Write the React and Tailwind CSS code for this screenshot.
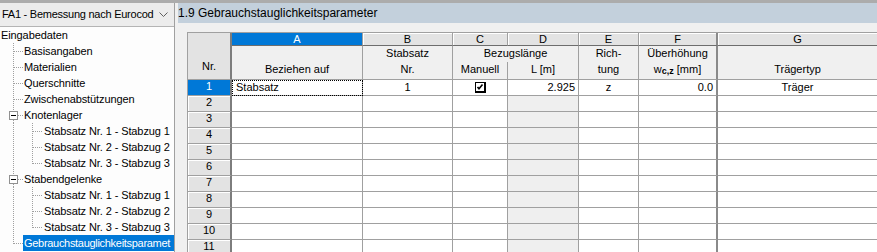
import React from "react";

const DOT = "#a0a0a0";

function L1Prefix({ exp, last }) {
  return (
    <svg width="23" height="16" className="shrink-0" shapeRendering="crispEdges">
      {exp ? (
        <>
          <line x1="13.5" y1="0" x2="13.5" y2="4" stroke={DOT} strokeDasharray="1 1" />
          {!last && <line x1="13.5" y1="13" x2="13.5" y2="16" stroke={DOT} strokeDasharray="1 1" />}
          <rect x="9.5" y="4.5" width="8" height="8" fill="#fff" stroke="#919191" />
          <line x1="11" y1="8.5" x2="16" y2="8.5" stroke="#000" />
          <line x1="18" y1="8.5" x2="23" y2="8.5" stroke={DOT} strokeDasharray="1 1" />
        </>
      ) : (
        <>
          <line x1="13.5" y1="0" x2="13.5" y2={last ? 9 : 16} stroke={DOT} strokeDasharray="1 1" />
          <line x1="14" y1="8.5" x2="23" y2="8.5" stroke={DOT} strokeDasharray="1 1" />
        </>
      )}
    </svg>
  );
}

function L2Prefix({ last }) {
  return (
    <svg width="43" height="16" className="shrink-0" shapeRendering="crispEdges">
      <line x1="13.5" y1="0" x2="13.5" y2="16" stroke={DOT} strokeDasharray="1 1" />
      <line x1="32.5" y1="0" x2="32.5" y2={last ? 9 : 16} stroke={DOT} strokeDasharray="1 1" />
      <line x1="33" y1="8.5" x2="43" y2="8.5" stroke={DOT} strokeDasharray="1 1" />
    </svg>
  );
}

const tree = [
  { t: "Eingabedaten", lvl: 0 },
  { t: "Basisangaben", lvl: 1 },
  { t: "Materialien", lvl: 1 },
  { t: "Querschnitte", lvl: 1 },
  { t: "Zwischenabstützungen", lvl: 1 },
  { t: "Knotenlager", lvl: 1, exp: true },
  { t: "Stabsatz Nr. 1 - Stabzug 1", lvl: 2 },
  { t: "Stabsatz Nr. 2 - Stabzug 2", lvl: 2 },
  { t: "Stabsatz Nr. 3 - Stabzug 3", lvl: 2, last: true },
  { t: "Stabendgelenke", lvl: 1, exp: true },
  { t: "Stabsatz Nr. 1 - Stabzug 1", lvl: 2 },
  { t: "Stabsatz Nr. 2 - Stabzug 2", lvl: 2 },
  { t: "Stabsatz Nr. 3 - Stabzug 3", lvl: 2, last: true },
  { t: "Gebrauchstauglichkeitsparamet", lvl: 1, last: true, sel: true },
];

function LeftPanel() {
  return (
    <div className="w-[175px] shrink-0 border-r border-[#a0a0a0] bg-[#fdfdfd] flex flex-col overflow-hidden">
      <div className="h-[24px] shrink-0 bg-[#ececec] border-b border-[#b4b4b4] flex items-center justify-between pl-[2px] pr-[6px]">
        <span className="whitespace-nowrap text-[11px] tracking-[-0.25px]">FA1 - Bemessung nach Eurocod</span>
        <svg width="9" height="6" className="shrink-0">
          <polyline points="0.5,0.5 4.5,4.5 8.5,0.5" fill="none" stroke="#606060" strokeWidth="1" />
        </svg>
      </div>
      <div className="flex flex-col">
        {tree.map((n, i) => (
          <div key={i} className="h-[16px] flex items-center whitespace-nowrap leading-[16px] tracking-[-0.1px]">
            {n.lvl === 0 && <span className="pl-[1px]">{n.t}</span>}
            {n.lvl === 1 && <L1Prefix exp={n.exp} last={n.last} />}
            {n.lvl === 2 && <L2Prefix last={n.last} />}
            {n.lvl > 0 && (
              <span
                className={
                  n.sel
                    ? "flex-1 bg-[#0078d7] text-white pl-[1px] h-[16px] tracking-[-0.3px]"
                    : "pl-[1px]"
                }
              >
                {n.t}
              </span>
            )}
          </div>
        ))}
      </div>
    </div>
  );
}

function Check() {
  return (
    <svg width="11" height="11" shapeRendering="crispEdges">
      <rect x="0.5" y="0.5" width="10" height="10" fill="#fff" stroke="#000" />
      <line x1="1" y1="9.5" x2="11" y2="9.5" stroke="#000" />
      <line x1="9.5" y1="1" x2="9.5" y2="10" stroke="#000" />
      <polyline points="2.5,5 4,6.8 7.5,2.5" fill="none" stroke="#000" strokeWidth="1.6" shapeRendering="auto" />
    </svg>
  );
}

const letters = ["A", "B", "C", "D", "E", "F", "G"];
const bd = "border-[#a0a0a0]";

function Grid() {
  const rows = Array.from({ length: 11 }, (_, i) => i + 1);
  return (
    <div className={`grid grid-cols-[44px_131px_90px_55px_71px_60px_79px_160px] border-t border-l ${bd} w-max`}>
      <div className="row-span-2 bg-[#e3e3e3] border-b border-b-[#a0a0a0] border-r-2 border-r-[#7d7d7d] text-center pt-[25px] leading-[16px]">
        Nr.
      </div>
      {letters.map((l, i) => (
        <div
          key={l}
          className={`h-[13px] leading-[13px] text-center border-b border-b-[#6d6d6d] ${
            i === 5 ? "border-r-2 border-r-[#8a8a8a]" : "border-r border-r-[#a0a0a0]"
          } ${i === 0 ? "bg-[#0078d7] text-white" : "bg-[#e3e3e3] shadow-[inset_1px_1px_0_#fff]"}`}
        >
          {l}
        </div>
      ))}
      <div className={`h-[34px] bg-[#f0f0f0] border-r border-b ${bd} text-center`}>
        <div className="h-[16px] leading-[15px]"></div>
        <div className="h-[17px] leading-[15px]">Beziehen auf</div>
      </div>
      <div className={`h-[34px] bg-[#f0f0f0] border-r border-b ${bd} text-center`}>
        <div className="h-[16px] leading-[15px]">Stabsatz</div>
        <div className="h-[17px] leading-[15px]">Nr.</div>
      </div>
      <div className={`col-span-2 h-[34px] bg-[#f0f0f0] border-r border-b ${bd} text-center flex flex-col`}>
        <div className="h-[16px] leading-[15px]">Bezugslänge</div>
        <div className="h-[17px] flex">
          <div className={`w-[55px] border-r ${bd} leading-[15px]`}>Manuell</div>
          <div className="flex-1 leading-[15px]">L [m]</div>
        </div>
      </div>
      <div className={`h-[34px] bg-[#f0f0f0] border-r border-b ${bd} text-center`}>
        <div className="h-[16px] leading-[15px]">Rich-</div>
        <div className="h-[17px] leading-[15px]">tung</div>
      </div>
      <div className={`h-[34px] bg-[#f0f0f0] border-r-2 border-r-[#8a8a8a] border-b ${bd} text-center`}>
        <div className="h-[16px] leading-[15px]">Überhöhung</div>
        <div className="h-[17px] leading-[15px] whitespace-nowrap">
          w<span className="text-[9px] font-bold align-[-1px]">c,z</span> [mm]
        </div>
      </div>
      <div className={`h-[34px] bg-[#f0f0f0] border-r border-b ${bd} text-center`}>
        <div className="h-[16px] leading-[15px]"></div>
        <div className="h-[17px] leading-[15px]">Trägertyp</div>
      </div>
      {rows.map((r) => {
        const first = r === 1;
        const c = `h-[16px] leading-[15px] border-r border-b ${bd}`;
        return (
          <React.Fragment key={r}>
            <div
              className={`h-[16px] leading-[13px] text-center border-b border-b-[#a0a0a0] border-r-2 border-r-[#7d7d7d] ${
                first ? "bg-[#0078d7] text-white" : "bg-[#e3e3e3] shadow-[inset_1px_1px_0_#fff]"
              }`}
            >
              {r}
            </div>
            <div className={`${c} bg-white pl-[4px] ${first ? "outline-1 outline-dotted outline-black -outline-offset-1" : ""}`}>
              {first ? "Stabsatz" : ""}
            </div>
            <div className={`${c} bg-white text-center`}>{first ? "1" : ""}</div>
            <div className={`${c} bg-white flex items-center justify-center`}>{first ? <Check /> : null}</div>
            <div className={`${c} ${first ? "bg-white" : "bg-[#efefef]"} text-right pr-[3px]`}>{first ? "2.925" : ""}</div>
            <div className={`${c} bg-white text-center`}>{first ? "z" : ""}</div>
            <div className={`h-[16px] leading-[15px] border-r-2 border-r-[#8a8a8a] border-b ${bd} bg-white text-right pr-[3px]`}>
              {first ? "0.0" : ""}
            </div>
            <div className={`${c} bg-white text-center`}>{first ? "Träger" : ""}</div>
          </React.Fragment>
        );
      })}
    </div>
  );
}

function RightPanel() {
  return (
    <div className="flex-1 min-w-0 flex flex-col overflow-hidden">
      <div className="h-[20px] shrink-0 bg-[#c3d0dc] text-[12px] leading-[20px] whitespace-nowrap">
        1.9 Gebrauchstauglichkeitsparameter
      </div>
      <div className="flex-1 min-h-0 pt-[9px] pl-[9px] overflow-hidden bg-[#f0f0f0]">
        <Grid />
      </div>
    </div>
  );
}

export default function App() {
  return (
    <div className="w-[877px] h-[252px] overflow-hidden bg-[#f0f0f0] font-['Liberation_Sans',Arial,sans-serif] text-[11px] text-black flex flex-col">
      <div className="h-[3px] shrink-0 bg-[#acacac]" />
      <div className="flex flex-1 min-h-0">
        <LeftPanel />
        <div className="w-[3px] shrink-0" />
        <RightPanel />
      </div>
    </div>
  );
}
